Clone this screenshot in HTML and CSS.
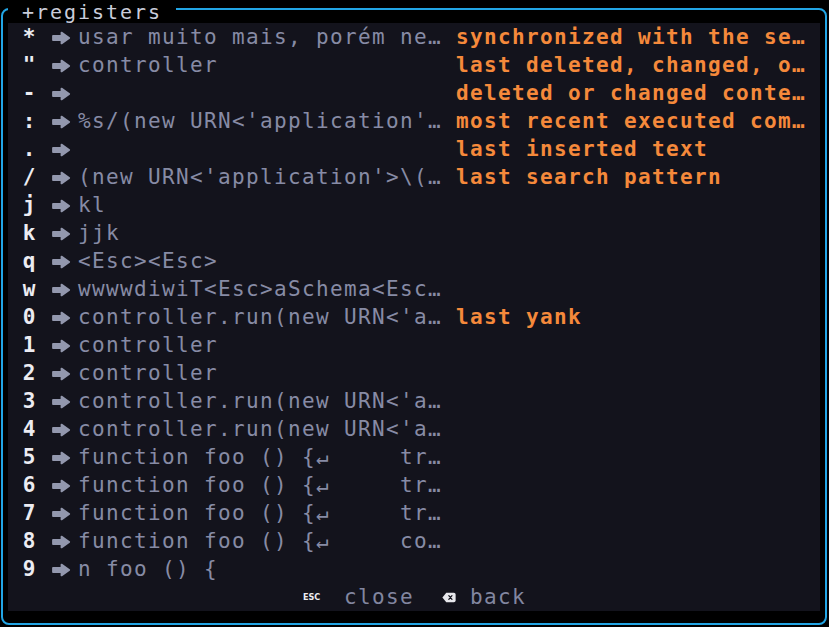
FILE: index.html
```html
<!DOCTYPE html>
<html lang="pt">
<head>
<meta charset="utf-8">
<title>registers</title>
<link rel="stylesheet" href="styles.css">
</head>
<body>
<div class="frame">
  <div class="title"> +registers </div>
  <div class="panel">
    <div class="row"><span class="key">*</span><span class="arrow"><svg viewBox="0 0 20 14" width="20" height="14"><path d="M2 4.9 H10.5 V1.6 L18.2 7 L10.5 12.4 V9.1 H2 Z"/></svg></span><span class="val">usar muito mais, porém ne…</span><span class="desc">synchronized with the se…</span></div>
    <div class="row"><span class="key">"</span><span class="arrow"><svg viewBox="0 0 20 14" width="20" height="14"><path d="M2 4.9 H10.5 V1.6 L18.2 7 L10.5 12.4 V9.1 H2 Z"/></svg></span><span class="val">controller</span><span class="desc">last deleted, changed, o…</span></div>
    <div class="row"><span class="key">-</span><span class="arrow"><svg viewBox="0 0 20 14" width="20" height="14"><path d="M2 4.9 H10.5 V1.6 L18.2 7 L10.5 12.4 V9.1 H2 Z"/></svg></span><span class="val"></span><span class="desc">deleted or changed conte…</span></div>
    <div class="row"><span class="key">:</span><span class="arrow"><svg viewBox="0 0 20 14" width="20" height="14"><path d="M2 4.9 H10.5 V1.6 L18.2 7 L10.5 12.4 V9.1 H2 Z"/></svg></span><span class="val">%s/(new URN&lt;'application'…</span><span class="desc">most recent executed com…</span></div>
    <div class="row"><span class="key">.</span><span class="arrow"><svg viewBox="0 0 20 14" width="20" height="14"><path d="M2 4.9 H10.5 V1.6 L18.2 7 L10.5 12.4 V9.1 H2 Z"/></svg></span><span class="val"></span><span class="desc">last inserted text</span></div>
    <div class="row"><span class="key">/</span><span class="arrow"><svg viewBox="0 0 20 14" width="20" height="14"><path d="M2 4.9 H10.5 V1.6 L18.2 7 L10.5 12.4 V9.1 H2 Z"/></svg></span><span class="val">(new URN&lt;'application'&gt;\(…</span><span class="desc">last search pattern</span></div>
    <div class="row"><span class="key">j</span><span class="arrow"><svg viewBox="0 0 20 14" width="20" height="14"><path d="M2 4.9 H10.5 V1.6 L18.2 7 L10.5 12.4 V9.1 H2 Z"/></svg></span><span class="val">kl</span></div>
    <div class="row"><span class="key">k</span><span class="arrow"><svg viewBox="0 0 20 14" width="20" height="14"><path d="M2 4.9 H10.5 V1.6 L18.2 7 L10.5 12.4 V9.1 H2 Z"/></svg></span><span class="val">jjk</span></div>
    <div class="row"><span class="key">q</span><span class="arrow"><svg viewBox="0 0 20 14" width="20" height="14"><path d="M2 4.9 H10.5 V1.6 L18.2 7 L10.5 12.4 V9.1 H2 Z"/></svg></span><span class="val">&lt;Esc&gt;&lt;Esc&gt;</span></div>
    <div class="row"><span class="key">w</span><span class="arrow"><svg viewBox="0 0 20 14" width="20" height="14"><path d="M2 4.9 H10.5 V1.6 L18.2 7 L10.5 12.4 V9.1 H2 Z"/></svg></span><span class="val">wwwwdiwiT&lt;Esc&gt;aSchema&lt;Esc…</span></div>
    <div class="row"><span class="key">0</span><span class="arrow"><svg viewBox="0 0 20 14" width="20" height="14"><path d="M2 4.9 H10.5 V1.6 L18.2 7 L10.5 12.4 V9.1 H2 Z"/></svg></span><span class="val">controller.run(new URN&lt;'a…</span><span class="desc">last yank</span></div>
    <div class="row"><span class="key">1</span><span class="arrow"><svg viewBox="0 0 20 14" width="20" height="14"><path d="M2 4.9 H10.5 V1.6 L18.2 7 L10.5 12.4 V9.1 H2 Z"/></svg></span><span class="val">controller</span></div>
    <div class="row"><span class="key">2</span><span class="arrow"><svg viewBox="0 0 20 14" width="20" height="14"><path d="M2 4.9 H10.5 V1.6 L18.2 7 L10.5 12.4 V9.1 H2 Z"/></svg></span><span class="val">controller</span></div>
    <div class="row"><span class="key">3</span><span class="arrow"><svg viewBox="0 0 20 14" width="20" height="14"><path d="M2 4.9 H10.5 V1.6 L18.2 7 L10.5 12.4 V9.1 H2 Z"/></svg></span><span class="val">controller.run(new URN&lt;'a…</span></div>
    <div class="row"><span class="key">4</span><span class="arrow"><svg viewBox="0 0 20 14" width="20" height="14"><path d="M2 4.9 H10.5 V1.6 L18.2 7 L10.5 12.4 V9.1 H2 Z"/></svg></span><span class="val">controller.run(new URN&lt;'a…</span></div>
    <div class="row"><span class="key">5</span><span class="arrow"><svg viewBox="0 0 20 14" width="20" height="14"><path d="M2 4.9 H10.5 V1.6 L18.2 7 L10.5 12.4 V9.1 H2 Z"/></svg></span><span class="val">function foo () {↵     tr…</span></div>
    <div class="row"><span class="key">6</span><span class="arrow"><svg viewBox="0 0 20 14" width="20" height="14"><path d="M2 4.9 H10.5 V1.6 L18.2 7 L10.5 12.4 V9.1 H2 Z"/></svg></span><span class="val">function foo () {↵     tr…</span></div>
    <div class="row"><span class="key">7</span><span class="arrow"><svg viewBox="0 0 20 14" width="20" height="14"><path d="M2 4.9 H10.5 V1.6 L18.2 7 L10.5 12.4 V9.1 H2 Z"/></svg></span><span class="val">function foo () {↵     tr…</span></div>
    <div class="row"><span class="key">8</span><span class="arrow"><svg viewBox="0 0 20 14" width="20" height="14"><path d="M2 4.9 H10.5 V1.6 L18.2 7 L10.5 12.4 V9.1 H2 Z"/></svg></span><span class="val">function foo () {↵     co…</span></div>
    <div class="row"><span class="key">9</span><span class="arrow"><svg viewBox="0 0 20 14" width="20" height="14"><path d="M2 4.9 H10.5 V1.6 L18.2 7 L10.5 12.4 V9.1 H2 Z"/></svg></span><span class="val">n foo () {</span></div>
    <div class="footer">
      <span class="f-esc"><span class="esc">ESC</span></span>
      <span class="f-close">close</span>
      <span class="f-gap"></span>
      <span class="f-bs"><svg viewBox="0 0 15 11" width="15" height="11"><path class="bs-body" d="M4.6 0.5 H12.8 A1.8 1.8 0 0 1 14.6 2.3 V8.7 A1.8 1.8 0 0 1 12.8 10.5 H4.6 L0.4 5.5 Z"/><path class="bs-x" d="M7.3 3.5 L10.7 7.5 M10.7 3.5 L7.3 7.5"/></svg></span>
      <span class="f-gap1"></span>
      <span class="f-back">back</span>
    </div>
  </div>
</div>
</body>
</html>
```

FILE: styles.css
```css
html, body {
  margin: 0;
  padding: 0;
  background: #000000;
}

body {
  width: 829px;
  height: 627px;
  overflow: hidden;
  font-family: "DejaVu Sans Mono", "Liberation Mono", monospace;
  font-size: 21px;
  letter-spacing: 1.357px;
  line-height: 28px;
}

.frame {
  position: relative;
  box-sizing: border-box;
  margin: 8px 0 0 1px;
  width: 826px;
  height: 617px;
  border: 2px solid #22a5e5;
  border-radius: 8px;
  padding: 13px 5px 12px 5px;
}

.title {
  position: absolute;
  left: 5px;
  top: -10px;
  height: 23px;
  line-height: 24px;
  font-size: 20px;
  letter-spacing: 1.96px;
  background: #000000;
  color: #c9ccda;
  white-space: pre;
}

.panel {
  background: #13131c;
  width: 812px;
  height: 588px;
}

.row {
  display: flex;
  height: 28px;
  white-space: pre;
}

.key {
  width: 14px;
  margin-left: 14px;
  margin-right: 14px;
  color: #ececf2;
  font-weight: bold;
  text-align: center;
  letter-spacing: 0;
}

.arrow {
  width: 28px;
  height: 28px;
  display: flex;
  align-items: center;
  padding: 2px 0 0 1px;
  box-sizing: border-box;
  color: #9398ae;
}

.arrow svg path {
  fill: currentColor;
  stroke: currentColor;
  stroke-width: 1.8;
  stroke-linejoin: round;
  stroke-linecap: round;
}

.val {
  width: 378px;
  color: #878ba5;
}

.desc {
  color: #f5893b;
  font-weight: bold;
}

.footer {
  display: flex;
  justify-content: center;
  align-items: center;
  height: 28px;
  color: #8286a0;
  white-space: pre;
}

.f-esc {
  width: 42px;
  display: flex;
  align-items: center;
}

.esc {
  font-family: "Liberation Sans Narrow", "DejaVu Sans Condensed", "Liberation Sans", sans-serif;
  font-stretch: condensed;
  font-weight: bold;
  font-size: 9px;
  letter-spacing: 0;
  line-height: 10px;
  color: #ececf0;
  margin-left: 1px;
}

.f-close {
  width: 70px;
}

.f-gap {
  width: 28px;
}

.f-bs {
  width: 14px;
  height: 28px;
  display: flex;
  align-items: center;
}

.bs-body {
  fill: #e8e8ec;
}

.bs-x {
  stroke: #13131c;
  stroke-width: 1.3;
  stroke-linecap: round;
  fill: none;
}

.f-gap1 {
  width: 14px;
}

.f-back {
  width: 56px;
}
```
